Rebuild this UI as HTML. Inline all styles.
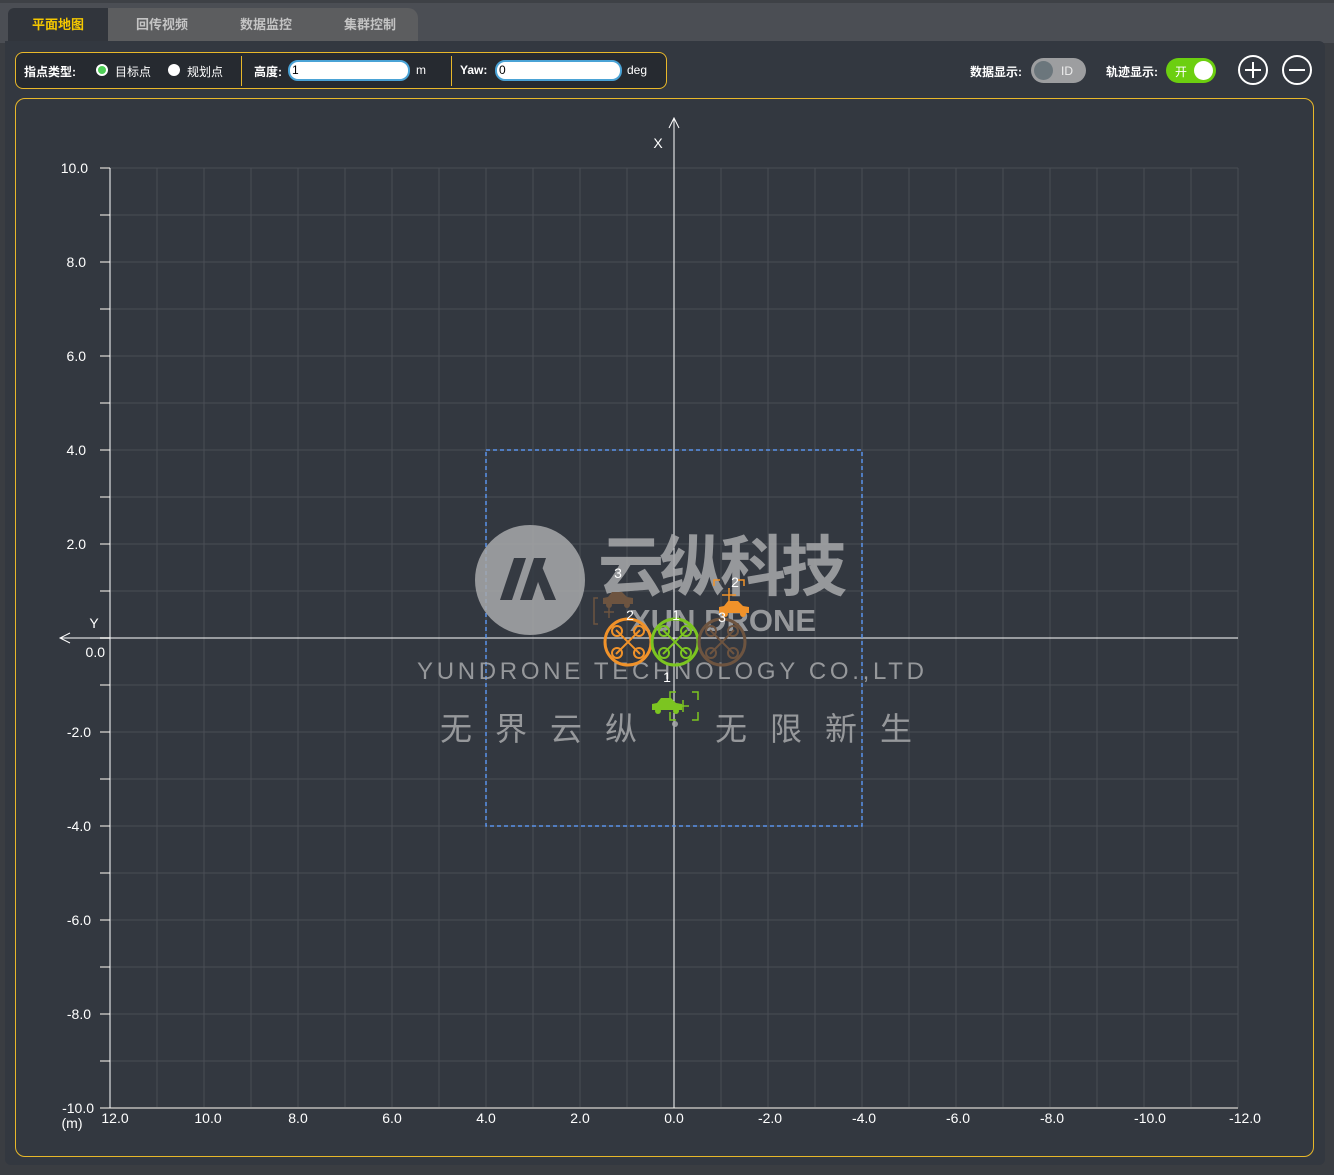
<!DOCTYPE html>
<html><head><meta charset="utf-8"><style>
body{margin:0;width:1334px;height:1175px;background:#3a3d42;font-family:"Liberation Sans","Noto Sans CJK SC",sans-serif;position:relative;overflow:hidden}
.top{position:absolute;left:0;top:0;width:1334px;height:8px;background:#3e4146}
.bar{position:absolute;left:0;top:3px;width:1334px;height:40px;background:#4b4e54}
.tabs{position:absolute;left:8px;top:8px;width:410px;height:33px;background:#5c5d5f;border-radius:6px 10px 0 0}
.tab{position:absolute;top:8px;height:33px;line-height:33px;font-size:13px;font-weight:bold;color:#c4c4c4;text-align:center;width:104px}
.panel{position:absolute;left:5px;top:41px;width:1320px;height:1124px;background:#333840;border-radius:0 6px 6px 6px}
.tb{position:absolute;left:15px;top:52px;width:650px;height:35px;border:1px solid #e8b82a;border-radius:8px;background:#262a30}
.t{position:absolute;color:#fff;font-size:12px;font-weight:bold}
.inp{position:absolute;height:17px;background:#fff;border:2px solid #4aa3d6;border-radius:10px;font-size:12px;line-height:17px;color:#000;padding-left:2px}
.sep{position:absolute;top:56px;width:1px;height:30px;background:#e8b82a}
.chart{position:absolute;left:15px;top:98px;width:1297px;height:1057px;border:1px solid #e8b82a;border-radius:10px}
</style></head><body>
<div class="top"></div><div class="bar"></div>
<div class="tabs"></div>
<div style="position:absolute;left:8px;top:8px;width:100px;height:33px;background:#31353c;border-radius:6px 0 0 0"></div>
<div class="tab" style="left:6px;color:#f5c800">平面地图</div>
<div class="tab" style="left:110px">回传视频</div>
<div class="tab" style="left:214px">数据监控</div>
<div class="tab" style="left:318px">集群控制</div>
<div class="panel"></div>
<div class="tb"></div>
<div class="t" style="left:24px;top:63px">指点类型:</div>
<div style="position:absolute;left:96px;top:64px;width:8px;height:8px;border-radius:50%;background:#4fcf57;border:2px solid #fff"></div>
<div class="t" style="left:115px;top:63px;font-weight:normal">目标点</div>
<div style="position:absolute;left:168px;top:64px;width:12px;height:12px;border-radius:50%;background:#fff"></div>
<div class="t" style="left:187px;top:63px;font-weight:normal">规划点</div>
<div class="sep" style="left:241px"></div>
<div class="t" style="left:254px;top:63px">高度:</div>
<div class="inp" style="left:288px;top:60px;width:116px">1</div>
<div class="t" style="left:416px;top:63px;font-weight:normal">m</div>
<div class="sep" style="left:451px"></div>
<div class="t" style="left:460px;top:63px">Yaw:</div>
<div class="inp" style="left:495px;top:60px;width:121px">0</div>
<div class="t" style="left:627px;top:63px;font-weight:normal">deg</div>
<div class="t" style="left:970px;top:63px">数据显示:</div>
<div style="position:absolute;left:1031px;top:58px;width:55px;height:25px;border-radius:13px;background:#9d9ea0"></div>
<div style="position:absolute;left:1034px;top:61px;width:19px;height:19px;border-radius:50%;background:#6b767c"></div>
<div class="t" style="left:1061px;top:64px;font-weight:normal;color:#eee">ID</div>
<div class="t" style="left:1106px;top:63px">轨迹显示:</div>
<div style="position:absolute;left:1166px;top:58px;width:50px;height:25px;border-radius:13px;background:#6ccf10"></div>
<div style="position:absolute;left:1194px;top:61px;width:19px;height:19px;border-radius:50%;background:#fff"></div>
<div class="t" style="left:1175px;top:63px;font-weight:normal">开</div>
<svg style="position:absolute;left:0;top:0" width="1334" height="1175">
<g stroke="#fff" stroke-width="2" fill="none"><circle cx="1253" cy="70" r="14"/><path d="M1245 70h16M1253 62v16"/><circle cx="1297" cy="70" r="14"/><path d="M1289 70h16"/></g>
</svg>
<div class="chart"></div>
<svg style="position:absolute;left:0;top:0" width="1334" height="1175" font-family="Liberation Sans, Noto Sans CJK SC, sans-serif">
<g stroke="#4a4e55" stroke-width="1">
<path d="M157 168V1108M204 168V1108M251 168V1108M298 168V1108M345 168V1108M392 168V1108M439 168V1108M486 168V1108M533 168V1108M580 168V1108M627 168V1108M721 168V1108M768 168V1108M815 168V1108M862 168V1108M909 168V1108M956 168V1108M1003 168V1108M1050 168V1108M1097 168V1108M1144 168V1108M1191 168V1108M1238 168V1108"/>
<path d="M110 168H1238M110 215H1238M110 262H1238M110 309H1238M110 356H1238M110 403H1238M110 450H1238M110 497H1238M110 544H1238M110 591H1238M110 685H1238M110 732H1238M110 779H1238M110 826H1238M110 873H1238M110 920H1238M110 967H1238M110 1014H1238M110 1061H1238"/>
</g>
<g stroke="#9a9a9a" stroke-width="2"><path d="M100 168h10M100 215h10M100 262h10M100 309h10M100 356h10M100 403h10M100 450h10M100 497h10M100 544h10M100 591h10M100 638h10M100 685h10M100 732h10M100 779h10M100 826h10M100 873h10M100 920h10M100 967h10M100 1014h10M100 1061h10"/><path d="M100 1108H1238"/></g>
<path d="M110 168V1108" stroke="#fff"/>
<path d="M60 638H1238M674 1108V118M669 128l5-10 5 10M70 633l-10 5 10 5" stroke="#fff" fill="none"/>
<rect x="486" y="450" width="376" height="376" fill="none" stroke="#5b93ea" stroke-width="1.5" stroke-dasharray="4 3"/>
<g fill="#fff" font-size="14" text-anchor="end">
<text x="88" y="173">10.0</text><text x="86" y="267">8.0</text><text x="86" y="361">6.0</text><text x="86" y="455">4.0</text><text x="86" y="549">2.0</text><text x="105" y="657">0.0</text><text x="91" y="737">-2.0</text><text x="91" y="831">-4.0</text><text x="91" y="925">-6.0</text><text x="91" y="1019">-8.0</text><text x="94" y="1113">-10.0</text>
</g>
<g fill="#fff" font-size="14" text-anchor="middle">
<text x="115" y="1123">12.0</text><text x="208" y="1123">10.0</text><text x="298" y="1123">8.0</text><text x="392" y="1123">6.0</text><text x="486" y="1123">4.0</text><text x="580" y="1123">2.0</text><text x="674" y="1123">0.0</text><text x="770" y="1123">-2.0</text><text x="864" y="1123">-4.0</text><text x="958" y="1123">-6.0</text><text x="1052" y="1123">-8.0</text><text x="1150" y="1123">-10.0</text><text x="1245" y="1123">-12.0</text>
<text x="72" y="1128">(m)</text><text x="658" y="148">X</text><text x="94" y="628">Y</text>
</g>
<g opacity="0.85">
<circle cx="530" cy="580" r="55" fill="#a8a9ab"/>
<path d="M500 600l14-42h12l-14 42zM520 600l14-42h12l-14 42zM540 562l16 38h-11l-10-26z" fill="#363b43"/>
<text x="598" y="590" font-size="66" font-weight="bold" fill="#a8a9ab" letter-spacing="-5">云纵科技</text>
<text x="630" y="631" font-size="31" font-weight="bold" fill="#a8a9ab">XUN DRONE</text>
<text x="417" y="679" font-size="24" fill="#a8a9ab" letter-spacing="3.7">YUNDRONE TECHNOLOGY CO.,LTD</text>
<g font-size="32" fill="#a8a9ab" text-anchor="middle"><text x="456" y="740">无</text><text x="511" y="740">界</text><text x="566" y="740">云</text><text x="621" y="740">纵</text><text x="731" y="740">无</text><text x="786" y="740">限</text><text x="841" y="740">新</text><text x="896" y="740">生</text></g>
<circle cx="675" cy="724" r="3" fill="#a8a9ab"/>
</g>
<g fill="none" stroke-width="3">
<circle cx="628" cy="642" r="23" stroke="#f0922a"/><circle cx="675" cy="642" r="23" stroke="#7cc521"/><circle cx="722" cy="642" r="23" stroke="#6d5440"/>
</g>
<g stroke-width="2" fill="none">
<path d="M616 630l24 24M640 630l-24 24" stroke="#f0922a"/><circle cx="617" cy="631" r="5" stroke="#f0922a"/><circle cx="639" cy="631" r="5" stroke="#f0922a"/><circle cx="617" cy="653" r="5" stroke="#f0922a"/><circle cx="639" cy="653" r="5" stroke="#f0922a"/>
<path d="M663 630l24 24M687 630l-24 24" stroke="#7cc521"/><circle cx="664" cy="631" r="5" stroke="#7cc521"/><circle cx="686" cy="631" r="5" stroke="#7cc521"/><circle cx="664" cy="653" r="5" stroke="#7cc521"/><circle cx="686" cy="653" r="5" stroke="#7cc521"/>
<path d="M710 630l24 24M734 630l-24 24" stroke="#6d5440"/><circle cx="711" cy="631" r="5" stroke="#6d5440"/><circle cx="733" cy="631" r="5" stroke="#6d5440"/><circle cx="711" cy="653" r="5" stroke="#6d5440"/><circle cx="733" cy="653" r="5" stroke="#6d5440"/>
</g>
<g fill="#6d5440"><path d="M603 604v-6l5-1 4-5h10l5 5 6 1v6z"/><circle cx="609" cy="605" r="3"/><circle cx="627" cy="605" r="3"/></g>
<g fill="#f0922a"><path d="M719 613v-6l5-1 4-5h10l5 5 6 1v6z"/><circle cx="725" cy="614" r="3"/><circle cx="743" cy="614" r="3"/></g>
<g fill="#7cc521"><path d="M652 710v-6l5-1 4-5h10l5 5 6 1v6z"/><circle cx="658" cy="711" r="3"/><circle cx="676" cy="711" r="3"/></g>
<g fill="none" stroke-width="1.5">
<path d="M598 598h-4v26h4M604 612h10M609 604v14" stroke="#6d5440"/>
<path d="M714 586v-6h6M738 580h6v6M729 588v14M722 595h14" stroke="#f0922a"/>
<path d="M670 700v-8h6M692 692h6v8M692 720h6v-8M670 712v8h6M677 706h12M683 700v12" stroke="#7cc521"/>
</g>
<g fill="#fff" font-size="14" text-anchor="middle"><text x="618" y="578">3</text><text x="735" y="587">2</text><text x="630" y="620">2</text><text x="676" y="620">1</text><text x="722" y="622">3</text><text x="667" y="682">1</text></g>
</svg>
</body></html>
